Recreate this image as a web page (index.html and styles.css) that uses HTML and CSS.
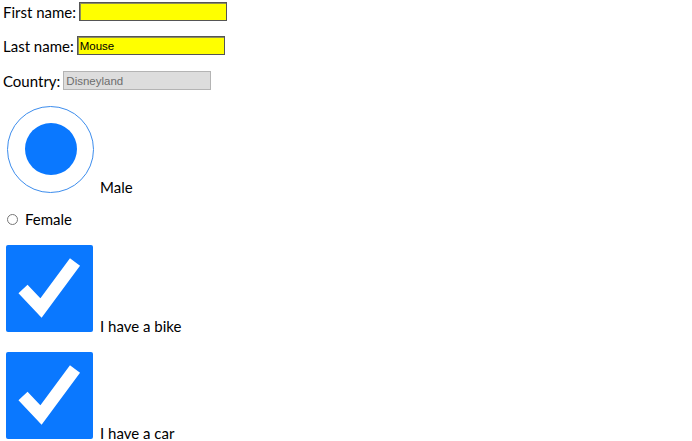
FILE: index.html
```html
<!DOCTYPE html>
<html lang="en">
<head>
<meta charset="utf-8">
<title>Form</title>
<link rel="stylesheet" href="styles.css">
</head>
<body>
<form class="page">
  <div class="field field-first">
    <label for="fname">First name:</label>
    <input id="fname" class="text-input" type="text">
  </div>
  <div class="field field-last">
    <label for="lname">Last name:</label>
    <input id="lname" class="text-input" type="text" value="Mouse">
  </div>
  <div class="field field-country">
    <label for="country">Country:</label>
    <input id="country" class="text-input disabled" type="text" value="Disneyland" disabled>
  </div>
  <div class="choice choice-male">
    <span class="big-radio"><span class="big-radio-dot"></span></span>
    <span class="choice-label">Male</span>
  </div>
  <div class="choice choice-female">
    <span class="small-radio"></span>
    <span class="choice-label">Female</span>
  </div>
  <div class="choice choice-bike">
    <span class="big-check">
      <svg class="check-mark" viewBox="0 0 87 87" width="87" height="87"><polyline points="17,44 35,63 69,17" fill="none" stroke="#fff" stroke-width="12.5" stroke-linejoin="miter" stroke-linecap="butt"/></svg>
    </span>
    <span class="choice-label">I have a bike</span>
  </div>
  <div class="choice choice-car">
    <span class="big-check">
      <svg class="check-mark" viewBox="0 0 87 87" width="87" height="87"><polyline points="17,44 35,63 69,17" fill="none" stroke="#fff" stroke-width="12.5" stroke-linejoin="miter" stroke-linecap="butt"/></svg>
    </span>
    <span class="choice-label">I have a car</span>
  </div>
</form>
</body>
</html>
```
FILE: styles.css
```css
html, body {
  margin: 0;
  padding: 0;
  background: #fff;
}
.page {
  display: flex;
  flex-direction: column;
  padding: 0 3px;
  font-family: Lato, "Open Sans", sans-serif;
  font-size: 15px;
  line-height: 20px;
  color: #000;
}
.field {
  display: flex;
  align-items: center;
  gap: 3px;
  height: 23px;
}
.field-first { margin-top: 0; }
.field-last { margin-top: 11px; }
.field-country { margin-top: 12px; }
.text-input {
  box-sizing: border-box;
  width: 148px;
  height: 19px;
  margin: 0;
  padding: 0 2px;
  border: 1px solid #555;
  box-shadow: inset 1px 1px 0 #8d8d5a;
  background: #ffff00;
  font-family: "Liberation Sans", Arial, sans-serif;
  font-size: 11.5px;
  color: #000;
  outline: none;
}
.text-input.disabled {
  border: 1px solid #b4b4b4;
  box-shadow: none;
  background: #dddddd;
  color: #6d6d6d;
}
.choice {
  display: flex;
  align-items: baseline;
}
.choice-male { margin-top: 14px; }
.choice-female { margin-top: 12px; }
.choice-bike { margin-top: 16px; }
.choice-car { margin-top: 16px; }
.big-radio {
  display: block;
  box-sizing: border-box;
  width: 87px;
  height: 87px;
  margin-left: 4px;
  margin-right: 6px;
  padding-top: 16.3px;
  border: 1.2px solid #3d8ded;
  border-radius: 50%;
}
.big-radio-dot {
  display: block;
  width: 52px;
  height: 52px;
  margin: 0 auto;
  border-radius: 50%;
  background: #0a78ff;
}
.small-radio {
  display: block;
  box-sizing: border-box;
  width: 11px;
  height: 11px;
  margin-left: 4px;
  margin-right: 7px;
  margin-bottom: 1px;
  border: 1px solid #777;
  border-radius: 50%;
  background: #fff;
}
.big-check {
  display: block;
  width: 87px;
  height: 87px;
  margin-left: 3px;
  margin-right: 7px;
  border-radius: 2px;
  background: #0a78ff;
}
.check-mark {
  display: block;
}
```
